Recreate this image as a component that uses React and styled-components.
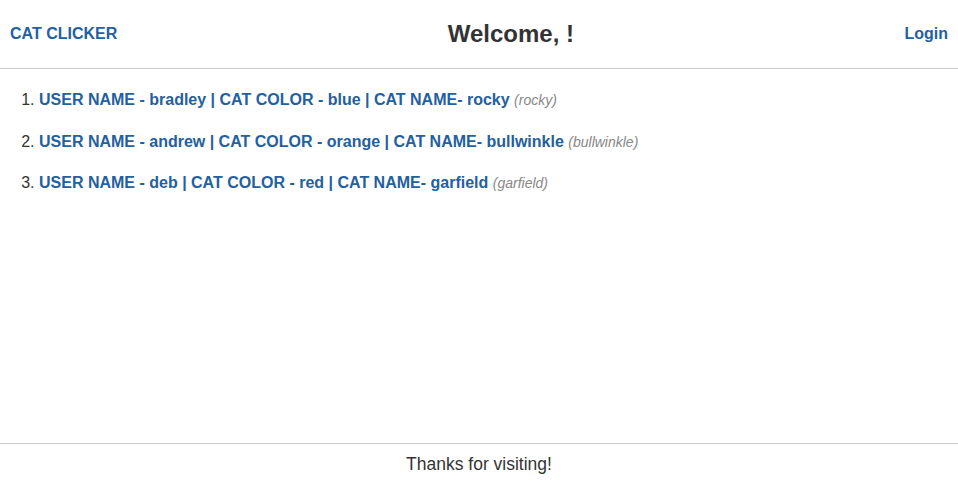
import styled, { createGlobalStyle } from "styled-components";

const GlobalStyle = createGlobalStyle`
	html, body {
		margin: 0;
		padding: 0;
		height: 100%;
	}
	body {
		font-family: "Liberation Sans", Arial, sans-serif;
		color: #333;
		background: #fff;
	}
`;

const Page = styled.div`
	display: flex;
	flex-direction: column;
	min-height: 100vh;
`;

const Header = styled.header`
	display: flex;
	justify-content: space-between;
	align-items: center;
	height: 68px;
	padding: 0 10px;
	border-bottom: 1px solid #ccc;
`;

const Brand = styled.a`
	font-size: 16px;
	font-weight: bold;
	color: #23609f;
	text-decoration: none;
`;

const Title = styled.h1`
	margin: 0;
	font-size: 24px;
	font-weight: bold;
	color: #333;
`;

const NavLink = styled.a`
	font-size: 16px;
	font-weight: bold;
	color: #23609f;
	text-decoration: none;
`;

const Main = styled.main`
	flex: 1;
	padding: 20px 0 0;
`;

const CatList = styled.ol`
	margin: 0;
	padding-left: 39px;
	font-size: 16px;
`;

const CatItem = styled.li`
	height: 22px;
	line-height: 22px;
	margin-bottom: 19.5px;
`;

const CatLink = styled.a`
	font-weight: bold;
	color: #23609f;
	text-decoration: none;
`;

const Nick = styled.small`
	font-size: 14px;
	font-style: italic;
	color: #888;
`;

const Footer = styled.footer`
	border-top: 1px solid #ccc;
	height: 40px;
	display: flex;
	align-items: center;
	justify-content: center;
	font-size: 17.5px;
	color: #333;
`;

const cats = [
	{ id: 1, user: "bradley", color: "blue", name: "rocky" },
	{ id: 2, user: "andrew", color: "orange", name: "bullwinkle" },
	{ id: 3, user: "deb", color: "red", name: "garfield" },
];

const App = () => (
	<Page>
		<GlobalStyle />
		<Header>
			<Brand href="#">CAT CLICKER</Brand>
			<Title>Welcome, !</Title>
			<NavLink href="#">Login</NavLink>
		</Header>
		<Main>
			<CatList>
				{cats.map((cat) => (
					<CatItem key={cat.id}>
						<CatLink href="#">
							USER NAME - {cat.user} | CAT COLOR - {cat.color} | CAT NAME- {cat.name}
						</CatLink>{" "}
						<Nick>({cat.name})</Nick>
					</CatItem>
				))}
			</CatList>
		</Main>
		<Footer>Thanks for visiting!</Footer>
	</Page>
);

export default App;
